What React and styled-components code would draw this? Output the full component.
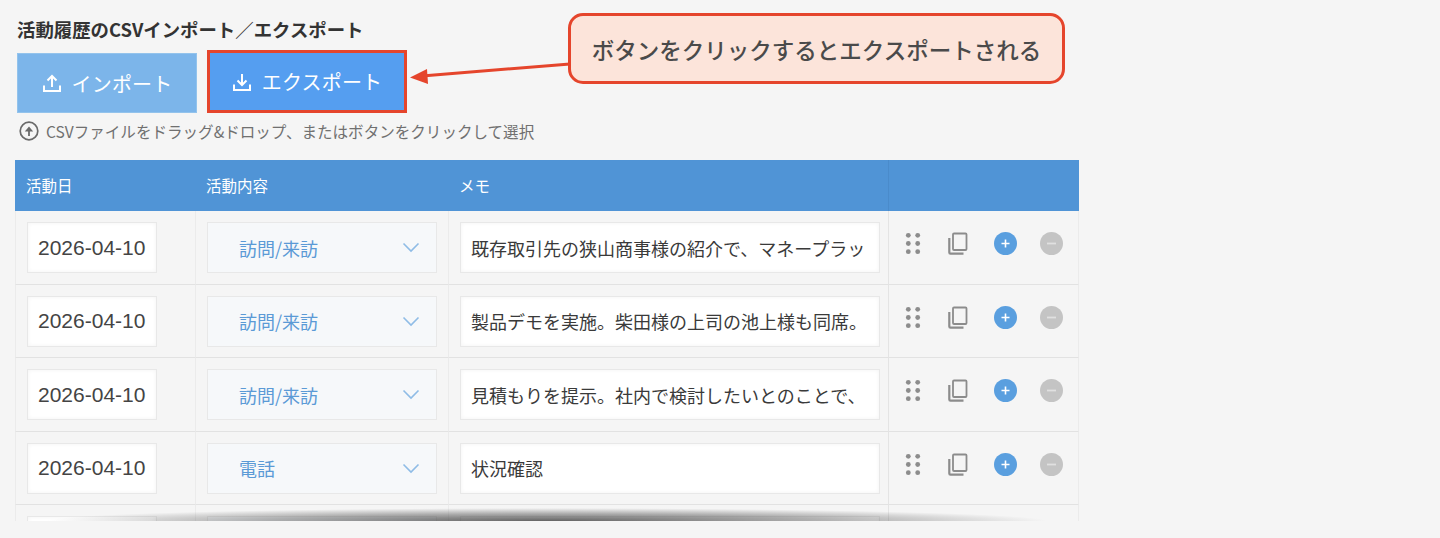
import React from 'react';
import styled, { createGlobalStyle } from 'styled-components';

const GlobalStyle = createGlobalStyle`
  html, body {
    margin: 0;
    padding: 0;
    background: #f5f5f5;
  }
  body {
    font-family: "Noto Sans CJK JP", "Noto Sans", sans-serif;
    color: #333;
  }
`;

const Page = styled.div`
  position: relative;
  width: 1440px;
  height: 538px;
  padding: 18px 0 0 15px;
  box-sizing: border-box;
  overflow: hidden;
`;

const Title = styled.h2`
  margin: 0 0 10px 2px;
  height: 22px;
  font-size: 18.4px;
  line-height: 22px;
  font-weight: 700;
  color: #333;
  white-space: nowrap;
`;

const ButtonRow = styled.div`
  display: flex;
  align-items: flex-end;
  gap: 10px;
  margin-left: 2px;
`;

const ActionButton = styled.button`
  display: flex;
  align-items: center;
  justify-content: center;
  gap: 10px;
  width: ${(p) => (p.$active ? '200px' : '180px')};
  height: ${(p) => (p.$active ? '63px' : '60px')};
  padding: 0;
  box-sizing: border-box;
  border: ${(p) => (p.$active ? '3px solid #e5452c' : '1px solid #93c3ec')};
  background: ${(p) => (p.$active ? '#559ef0' : '#7cb5ea')};
  color: #fff;
  font-family: inherit;
  font-size: 20px;
  font-weight: 400;
  letter-spacing: 0.2px;
`;

const Hint = styled.div`
  display: flex;
  align-items: center;
  gap: 7px;
  margin: 6px 0 17px 4px;
  height: 24px;
  font-size: 15.55px;
  color: #707070;
  white-space: nowrap;
`;

const TableClip = styled.div`
  position: relative;
  width: 1064px;
  height: 361px;
  overflow: hidden;
`;

const BottomShade = styled.div`
  position: absolute;
  left: 0;
  right: 0;
  bottom: 0;
  height: 13px;
  background: radial-gradient(ellipse 47% 100% at 50% 100%, rgba(60, 60, 60, 0.8), rgba(60, 60, 60, 0.4) 55%, rgba(60, 60, 60, 0) 100%);
`;

const Grid = styled.div`
  display: grid;
  grid-template-columns: 180px 253px 440px 191px;
`;

const HeadCell = styled.div`
  height: 51px;
  display: flex;
  align-items: center;
  padding: 0 0 2px 11px;
  box-sizing: border-box;
  background: #5094d6;
  color: #fff;
  font-size: 15.5px;
  font-weight: 400;
  ${(p) => p.$split && 'border-left: 1px solid #4a8bcb;'}
`;

const Cell = styled.div`
  height: 73.5px;
  box-sizing: border-box;
  padding: 11px 0 0 11px;
  border-bottom: 1px solid #e2e2e2;
  border-left: 1px solid ${(p) => (p.$split ? '#e4e4e4' : '#ebebeb')};
  ${(p) => p.$last && 'border-right: 1px solid #ebebeb;'}
`;

const Field = styled.div`
  height: 51px;
  width: ${(p) => p.$w}px;
  box-sizing: border-box;
  display: flex;
  align-items: center;
  background: #fff;
  border: 1px solid #e8e8e8;
  box-shadow: inset 0 0 4px rgba(0, 0, 0, 0.05);
  overflow: hidden;
  white-space: nowrap;
  font-size: 18px;
  color: #3a3a3a;
`;

const DateField = styled(Field)`
  padding-left: 10px;
  font-family: "Liberation Sans", sans-serif;
  font-size: 21px;
  color: #444;
`;

const MemoField = styled(Field)`
  padding-left: 10px;
`;

const SelectField = styled(Field)`
  justify-content: space-between;
  padding: 0 16px 0 31px;
  background: #f6f8fa;
  box-shadow: none;
  color: #5b9ad6;
`;

const Tools = styled.div`
  display: flex;
  align-items: center;
  height: 30px;
  margin: 6px 0 0 5px;
`;

const ToolSlot = styled.div`
  display: flex;
  margin-left: ${(p) => p.$gap}px;
`;

const RoundIcon = styled.span`
  width: 23px;
  height: 23px;
  margin-top: 1px;
  border-radius: 50%;
  background: ${(p) => p.$color};
  display: block;
`;

const Callout = styled.div`
  position: absolute;
  left: 568px;
  top: 13px;
  width: 497px;
  height: 71px;
  box-sizing: border-box;
  display: flex;
  align-items: center;
  justify-content: center;
  border: 3px solid #e5452c;
  border-radius: 15px;
  background: #fce4da;
  color: #4a4a4a;
  font-size: 22.5px;
  font-weight: 500;
  white-space: nowrap;
`;

const ArrowLayer = styled.svg`
  position: absolute;
  left: 400px;
  top: 55px;
`;

const UploadIcon = () => (
  <svg width="20" height="20" viewBox="0 0 20 20" fill="none" stroke="#fff" strokeWidth="2">
    <path d="M2 12.5V18H18V12.5" />
    <path d="M10 14V3M5.5 7.5L10 3L14.5 7.5" />
  </svg>
);

const DownloadIcon = () => (
  <svg width="20" height="20" viewBox="0 0 20 20" fill="none" stroke="#fff" strokeWidth="2">
    <path d="M2 12.5V18H18V12.5" />
    <path d="M10 2V13M5.5 8.5L10 13L14.5 8.5" />
  </svg>
);

const HintIcon = () => (
  <svg width="20" height="20" viewBox="0 0 20 20" fill="none" stroke="#6a6a6a" strokeWidth="1.7">
    <circle cx="10" cy="10" r="8.8" />
    <path d="M10 15V8" strokeWidth="1.8" />
    <path d="M5.8 10.4L10 5.6L14.2 10.4Z" fill="#6a6a6a" stroke="none" />
  </svg>
);

const Chevron = () => (
  <svg width="18" height="11" viewBox="0 0 18 11" fill="none" stroke="#8fbce6" strokeWidth="1.6">
    <path d="M1.5 1.5L9 9L16.5 1.5" />
  </svg>
);

const GripIcon = () => (
  <svg width="16" height="24" viewBox="0 0 16 24" fill="#8c8c8c">
    {[4.3, 12.5, 20.7].map((y) => (
      <g key={y}>
        <circle cx="3.3" cy={y} r="2.4" />
        <circle cx="12.7" cy={y} r="2.4" />
      </g>
    ))}
  </svg>
);

const CopyIcon = () => (
  <svg width="20" height="24" viewBox="0 0 20 24" fill="none" stroke="#8c8c8c" strokeWidth="1.8">
    <rect x="5" y="2.5" width="13.5" height="16.5" rx="1" />
    <path d="M1.3 7V21.5C1.3 22.3 1.8 22.7 2.5 22.7H15.5" strokeWidth="2.2" />
  </svg>
);

const PlusIcon = () => (
  <RoundIcon $color="#5a9fdf">
    <svg width="23" height="23" viewBox="0 0 23 23" stroke="#fff" strokeWidth="1.6">
      <path d="M11.5 7.5V15.5M7.5 11.5H15.5" />
    </svg>
  </RoundIcon>
);

const MinusIcon = () => (
  <RoundIcon $color="#c4c4c4">
    <svg width="23" height="23" viewBox="0 0 23 23" stroke="#e0e0e0" strokeWidth="1.8">
      <path d="M7 11.5H16" />
    </svg>
  </RoundIcon>
);

const rows = [
  { date: '2026-04-10', kind: '訪問/来訪', memo: '既存取引先の狭山商事様の紹介で、マネープラッ' },
  { date: '2026-04-10', kind: '訪問/来訪', memo: '製品デモを実施。柴田様の上司の池上様も同席。' },
  { date: '2026-04-10', kind: '訪問/来訪', memo: '見積もりを提示。社内で検討したいとのことで、' },
  { date: '2026-04-10', kind: '電話', memo: '状況確認' },
  { date: '', kind: '', memo: '' },
];

export default function App() {
  return (
    <>
      <GlobalStyle />
      <Page>
        <Title>活動履歴のCSVインポート／エクスポート</Title>
        <ButtonRow>
          <ActionButton>
            <UploadIcon />
            インポート
          </ActionButton>
          <ActionButton $active>
            <DownloadIcon />
            エクスポート
          </ActionButton>
        </ButtonRow>
        <Hint>
          <HintIcon />
          CSVファイルをドラッグ&ドロップ、またはボタンをクリックして選択
        </Hint>
        <TableClip>
          <Grid>
            <HeadCell>活動日</HeadCell>
            <HeadCell>活動内容</HeadCell>
            <HeadCell>メモ</HeadCell>
            <HeadCell $split />
            {rows.map((row, i) => (
              <React.Fragment key={i}>
                <Cell>
                  <DateField $w={130}>{row.date}</DateField>
                </Cell>
                <Cell>
                  <SelectField $w={230}>
                    {row.kind}
                    <Chevron />
                  </SelectField>
                </Cell>
                <Cell>
                  <MemoField $w={420}>{row.memo}</MemoField>
                </Cell>
                <Cell $split $last>
                  <Tools>
                    <ToolSlot $gap={0}><GripIcon /></ToolSlot>
                    <ToolSlot $gap={27}><CopyIcon /></ToolSlot>
                    <ToolSlot $gap={26}><PlusIcon /></ToolSlot>
                    <ToolSlot $gap={23}><MinusIcon /></ToolSlot>
                  </Tools>
                </Cell>
              </React.Fragment>
            ))}
          </Grid>
          <BottomShade />
        </TableClip>
        <Callout>ボタンをクリックするとエクスポートされる</Callout>
        <ArrowLayer width="180" height="32" viewBox="0 0 180 32">
          <path d="M170 9L22 21" stroke="#e5452c" strokeWidth="3" fill="none" />
          <path d="M10 22.5L27 14L28 29Z" fill="#e5452c" />
        </ArrowLayer>
      </Page>
    </>
  );
}
